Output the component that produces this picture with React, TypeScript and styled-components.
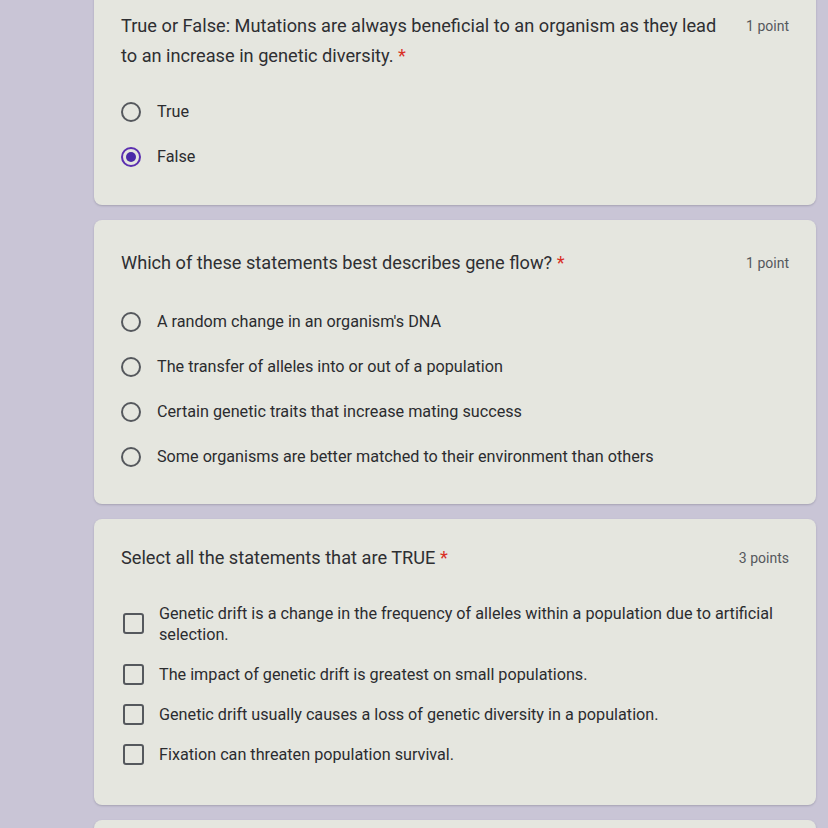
import React from "react";
import styled, { createGlobalStyle } from "styled-components";

const GlobalStyle = createGlobalStyle`
  html, body {
    margin: 0;
    padding: 0;
    background: #c9c5d6;
    font-family: Roboto, "Liberation Sans", Arial, sans-serif;
    overflow: hidden;
  }
`;

const Page = styled.div`
  width: 828px;
  height: 828px;
  overflow: hidden;
  background: #c9c5d6;
`;

const Column = styled.div`
  display: flex;
  flex-direction: column;
  gap: 15px;
  margin: -15px 12px 0 94px;
`;

const Card = styled.section<{ $padTop: number; $padBottom: number }>`
  background: #e5e6df;
  border-radius: 8px;
  box-shadow: 0 1px 2px rgba(60, 60, 80, 0.25);
  padding: ${(p) => p.$padTop}px 27px ${(p) => p.$padBottom}px 27px;
`;

const Header = styled.div`
  display: flex;
  justify-content: space-between;
  align-items: flex-start;
  gap: 24px;
`;

const Title = styled.div`
  font-size: 18.2px;
  line-height: 30px;
  color: #2e2f32;
`;

const Star = styled.span`
  color: #d93025;
`;

const Points = styled.div`
  flex: none;
  font-size: 14px;
  line-height: 30px;
  color: #55585d;
`;

const Options = styled.div<{ $gapTop: number }>`
  display: flex;
  flex-direction: column;
  margin-top: ${(p) => p.$gapTop}px;
`;

const RadioRow = styled.label`
  display: flex;
  align-items: center;
  gap: 16px;
  height: 45px;
  font-size: 16.2px;
  color: #2b2c2f;
`;

const RadioCircle = styled.span<{ $checked?: boolean }>`
  flex: none;
  box-sizing: border-box;
  width: 20px;
  height: 20px;
  border-radius: 50%;
  border: 2px solid ${(p) => (p.$checked ? "#5b2fb0" : "#55585d")};
  display: flex;
  align-items: center;
  justify-content: center;

  &::after {
    content: "";
    width: 10px;
    height: 10px;
    border-radius: 50%;
    background: #4a2aa8;
    display: ${(p) => (p.$checked ? "block" : "none")};
  }
`;

const CheckRow = styled.label`
  display: flex;
  align-items: center;
  gap: 15px;
  padding: 9.5px 0;
  font-size: 16.2px;
  line-height: 21px;
  color: #2b2c2f;
`;

const CheckBox = styled.span`
  flex: none;
  box-sizing: border-box;
  width: 21px;
  height: 21px;
  border: 2px solid #55585d;
  border-radius: 3px;
  margin-left: 2px;
`;

const CheckText = styled.span`
  flex: 1;
  padding-right: 10px;
`;

const Stub = styled.section`
  background: #e5e6df;
  border-radius: 8px;
  height: 60px;
  box-shadow: 0 1px 2px rgba(60, 60, 80, 0.25);
`;

const geneFlow = [
  "A random change in an organism's DNA",
  "The transfer of alleles into or out of a population",
  "Certain genetic traits that increase mating success",
  "Some organisms are better matched to their environment than others",
];

const driftStatements = [
  "Genetic drift is a change in the frequency of alleles within a population due to artificial selection.",
  "The impact of genetic drift is greatest on small populations.",
  "Genetic drift usually causes a loss of genetic diversity in a population.",
  "Fixation can threaten population survival.",
];

export default function App() {
  return (
    <Page>
      <GlobalStyle />
      <Column>
        <Card $padTop={26} $padBottom={26}>
          <Header>
            <Title>
              True or False: Mutations are always beneficial to an organism as they lead to an
              increase in genetic diversity. <Star>*</Star>
            </Title>
            <Points>1 point</Points>
          </Header>
          <Options $gapTop={18}>
            <RadioRow>
              <RadioCircle />
              True
            </RadioRow>
            <RadioRow>
              <RadioCircle $checked />
              False
            </RadioRow>
          </Options>
        </Card>

        <Card $padTop={28} $padBottom={25}>
          <Header>
            <Title>
              Which of these statements best describes gene flow? <Star>*</Star>
            </Title>
            <Points>1 point</Points>
          </Header>
          <Options $gapTop={21}>
            {geneFlow.map((text) => (
              <RadioRow key={text}>
                <RadioCircle />
                {text}
              </RadioRow>
            ))}
          </Options>
        </Card>

        <Card $padTop={24} $padBottom={31}>
          <Header>
            <Title>
              Select all the statements that are TRUE <Star>*</Star>
            </Title>
            <Points>3 points</Points>
          </Header>
          <Options $gapTop={20}>
            {driftStatements.map((text) => (
              <CheckRow key={text}>
                <CheckBox />
                <CheckText>{text}</CheckText>
              </CheckRow>
            ))}
          </Options>
        </Card>

        <Stub />
      </Column>
    </Page>
  );
}
